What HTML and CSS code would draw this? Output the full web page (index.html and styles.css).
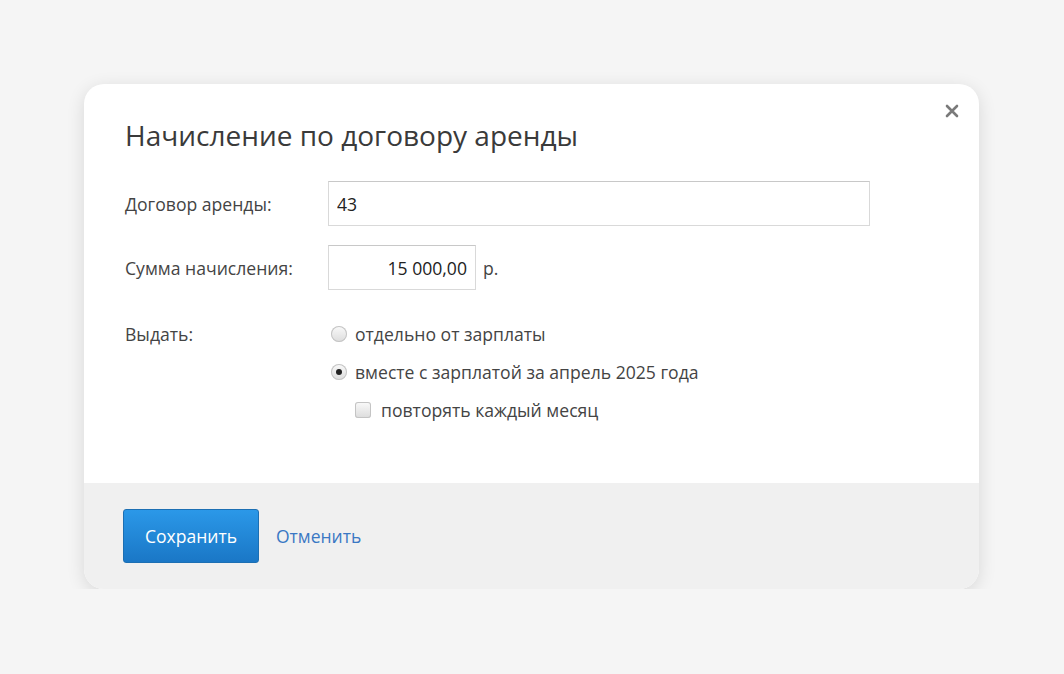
FILE: index.html
```html
<!DOCTYPE html>
<html lang="ru">
  <head>
    <meta charset="utf-8">
    <title>Начисление по договору аренды</title>
    <link rel="stylesheet" href="styles.css">
  </head>
  <body>
    <div class="dialog">
      <div class="dialog-body">
        <button class="close" type="button" aria-label="Закрыть">
          <svg width="14" height="14" viewBox="0 0 14 14"><path d="M2 2 L12 12 M12 2 L2 12" stroke="#7a7a7a" stroke-width="2.6" stroke-linecap="round"/></svg>
        </button>
        <h1 class="title">Начисление по договору аренды</h1>

        <div class="row">
          <label class="label" for="contract">Договор аренды:</label>
          <input class="field field-wide" type="text" id="contract" value="43">
        </div>

        <div class="row">
          <label class="label" for="sum">Сумма начисления:</label>
          <input class="field field-sum" type="text" id="sum" value="15 000,00">
          <span class="unit">р.</span>
        </div>

        <div class="row row-top">
          <span class="label">Выдать:</span>
          <div class="options">
            <label class="option"><span class="radio"></span>отдельно от зарплаты</label>
            <label class="option"><span class="radio checked"></span>вместе с зарплатой за апрель 2025 года</label>
            <label class="option sub"><span class="check"></span>повторять каждый месяц</label>
          </div>
        </div>
      </div>
      <div class="dialog-footer">
        <button class="btn-save" type="button">Сохранить</button>
        <a class="cancel" href="#">Отменить</a>
      </div>
    </div>
  </body>
</html>
```

FILE: styles.css
```css
body {
  margin: 0;
  background: #f5f5f5;
  font-family: "Open Sans", "Noto Sans", sans-serif;
  color: #333;
}

.dialog {
  width: 895px;
  margin: 84px 0 0 84px;
  background: #fff;
  border-radius: 20px;
  overflow: hidden;
  box-shadow: 0 4px 18px rgba(0, 0, 0, 0.12);
}

.dialog-body {
  position: relative;
  padding: 25px 41px 0;
  height: 399px;
  box-sizing: border-box;
}

.close {
  position: absolute;
  top: 20px;
  right: 20px;
  border: 0;
  background: none;
  padding: 0;
  cursor: pointer;
}

.title {
  margin: 0 0 20px;
  font-size: 28px;
  font-weight: 400;
  color: #3a3a3a;
  line-height: 52px;
}

.row {
  display: flex;
  align-items: center;
  margin-bottom: 19px;
}

.row-top {
  align-items: flex-start;
  padding-top: 7px;
}

.label {
  width: 203px;
  font-size: 17.6px;
  color: #444;
}

.row-top .label {
  line-height: 28px;
  margin-top: 4px;
}

.field {
  height: 45px;
  box-sizing: border-box;
  border: 1px solid #d9d9d9;
  border-top-color: #c8c8c8;
  padding: 0 8px;
  font-family: inherit;
  font-size: 17.6px;
  color: #222;
  outline: none;
}

.field-wide {
  width: 542px;
}

.field-sum {
  width: 148px;
  text-align: right;
}

.unit {
  margin-left: 7px;
  font-size: 17.6px;
  color: #444;
}

.options {
  display: flex;
  flex-direction: column;
  gap: 10px;
  margin-top: 4px;
}

.option {
  display: flex;
  align-items: center;
  height: 28px;
  font-size: 17.6px;
  color: #444;
}

.option.sub {
  margin-left: 27px;
}

.radio {
  width: 16px;
  height: 16px;
  border-radius: 50%;
  margin: 0 8px 0 3px;
  background: linear-gradient(#fafafa, #dcdcdc);
  box-shadow: inset 0 0 0 1px #c4c4c4;
  position: relative;
}

.radio.checked::after {
  content: "";
  position: absolute;
  left: 5px;
  top: 5px;
  width: 6px;
  height: 6px;
  border-radius: 50%;
  background: #222;
}

.check {
  width: 16px;
  height: 16px;
  border-radius: 3px;
  margin-right: 10px;
  background: linear-gradient(#fafafa, #dcdcdc);
  box-shadow: inset 0 0 0 1px #c4c4c4;
}

.dialog-footer {
  background: #f0f0f0;
  height: 106px;
  padding: 0 39px;
  display: flex;
  align-items: center;
  gap: 17px;
}

.btn-save {
  width: 136px;
  height: 54px;
  border: 1px solid #1c6fb3;
  border-radius: 3px;
  background: linear-gradient(#2b98e8, #1a77c6);
  color: #fff;
  font-family: inherit;
  font-size: 17.5px;
  cursor: pointer;
}

.cancel {
  color: #3a78c4;
  font-size: 17.5px;
  text-decoration: none;
}
```
